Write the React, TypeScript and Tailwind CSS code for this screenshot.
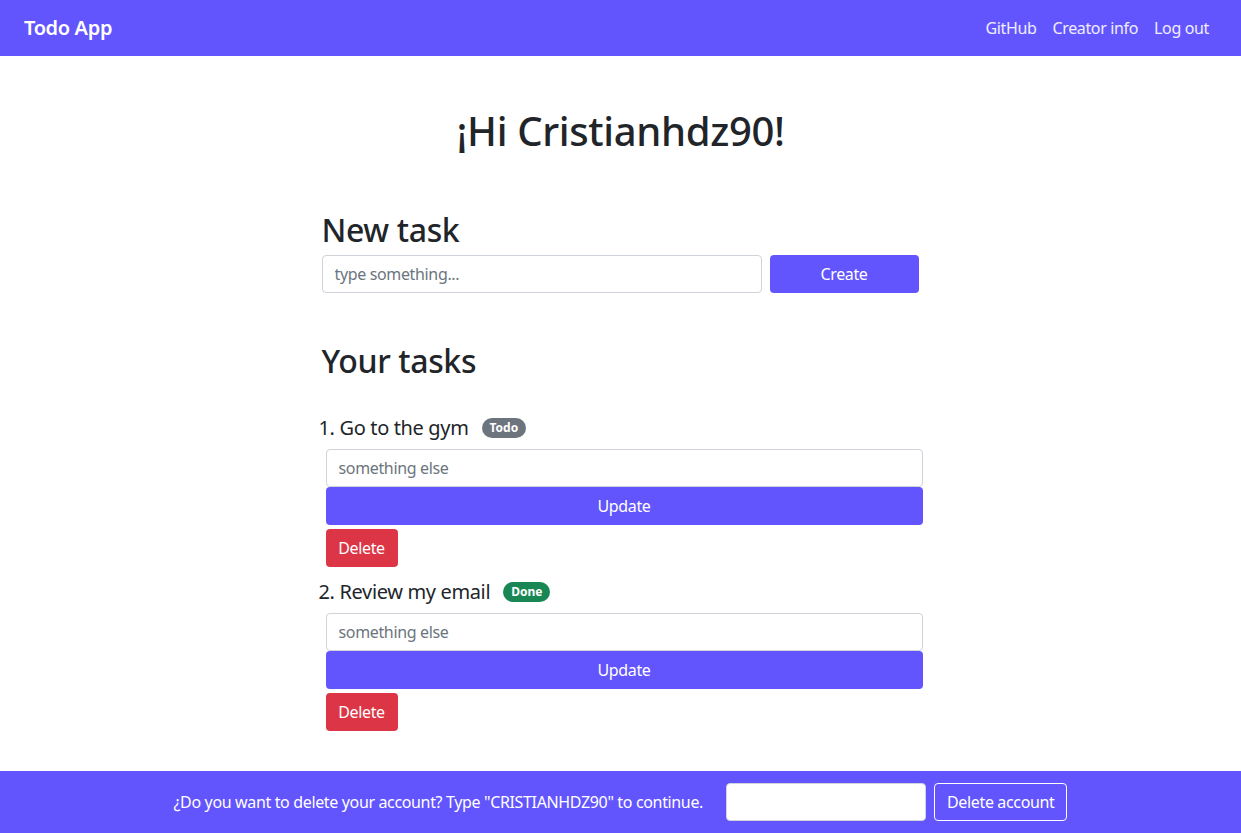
import React from "react";

const font = { fontFamily: '"Segoe UI", "Noto Sans", "Open Sans", sans-serif' };

function Task({ n, title, badge, badgeClass }: { n: number; title: string; badge: string; badgeClass: string }) {
  return (
    <div className="flex flex-col">
      <div className="flex items-center h-[30px] ml-[-3px] text-[20px] text-[#212529]">
        <span>{n}. {title}</span>
        <span className={`ml-[13px] inline-flex items-center justify-center h-[20px] px-[8px] rounded-full text-[12px] font-bold text-white tracking-normal ${badgeClass}`}>{badge}</span>
      </div>
      <div className="ml-[4px] mt-[6px] flex flex-col">
        <input
          className="h-[38px] w-[597px] border border-[#ced4da] rounded-[4px] px-3 text-[16px] outline-none placeholder:text-[#6c757d]"
          placeholder="something else"
        />
        <button className="h-[38px] w-[597px] bg-[#6355fe] text-white text-[16px] rounded-[4px]">Update</button>
        <button className="mt-[4px] h-[38px] w-[72px] bg-[#dc3545] text-white text-[16px] rounded-[4px]">Delete</button>
      </div>
    </div>
  );
}

export default function App() {
  return (
    <div style={font} className="min-h-[833px] flex flex-col bg-white text-[#212529] tracking-[-0.022em]">
      <nav className="h-14 bg-[#6355fe] flex items-center justify-between pl-6 pr-8 shrink-0">
        <span className="text-[20px] font-semibold text-white">Todo App</span>
        <div className="flex gap-4 text-[16px] text-white/90">
          <span>GitHub</span>
          <span>Creator info</span>
          <span>Log out</span>
        </div>
      </nav>
      <main className="flex-1 flex flex-col">
        <h1 className="mt-[51px] h-[48px] leading-[48px] text-center text-[40px] font-medium">¡Hi Cristianhdz90!</h1>
        <div className="w-[600px] mx-auto flex flex-col pl-[1px]">
          <h2 className="mt-[56px] h-[38px] leading-[38px] text-[32px] font-medium">New task</h2>
          <div className="mt-[6px] flex gap-2">
            <input
              className="h-[38px] w-[440px] border border-[#ced4da] rounded-[4px] px-3 text-[16px] outline-none placeholder:text-[#6c757d]"
              placeholder="type something..."
            />
            <button className="h-[38px] w-[149px] bg-[#6355fe] text-white text-[16px] rounded-[4px]">Create</button>
          </div>
          <h2 className="mt-[49px] h-[38px] leading-[38px] text-[32px] font-medium">Your tasks</h2>
          <div className="mt-[33px] flex flex-col gap-[10px]">
            <Task n={1} title="Go to the gym" badge="Todo" badgeClass="bg-[#6c757d]" />
            <Task n={2} title="Review my email" badge="Done" badgeClass="bg-[#198754]" />
          </div>
        </div>
      </main>
      <footer className="h-[62px] bg-[#6355fe] flex items-center justify-center shrink-0">
        <span className="text-white text-[16px] mr-[23px]">¿Do you want to delete your account? Type "CRISTIANHDZ90" to continue.</span>
        <input className="h-[38px] w-[200px] bg-white border border-[#ced4da] rounded-[4px] px-3 outline-none" />
        <button className="ml-2 h-[38px] px-3 border border-white text-white text-[16px] rounded-[4px]">Delete account</button>
      </footer>
    </div>
  );
}
